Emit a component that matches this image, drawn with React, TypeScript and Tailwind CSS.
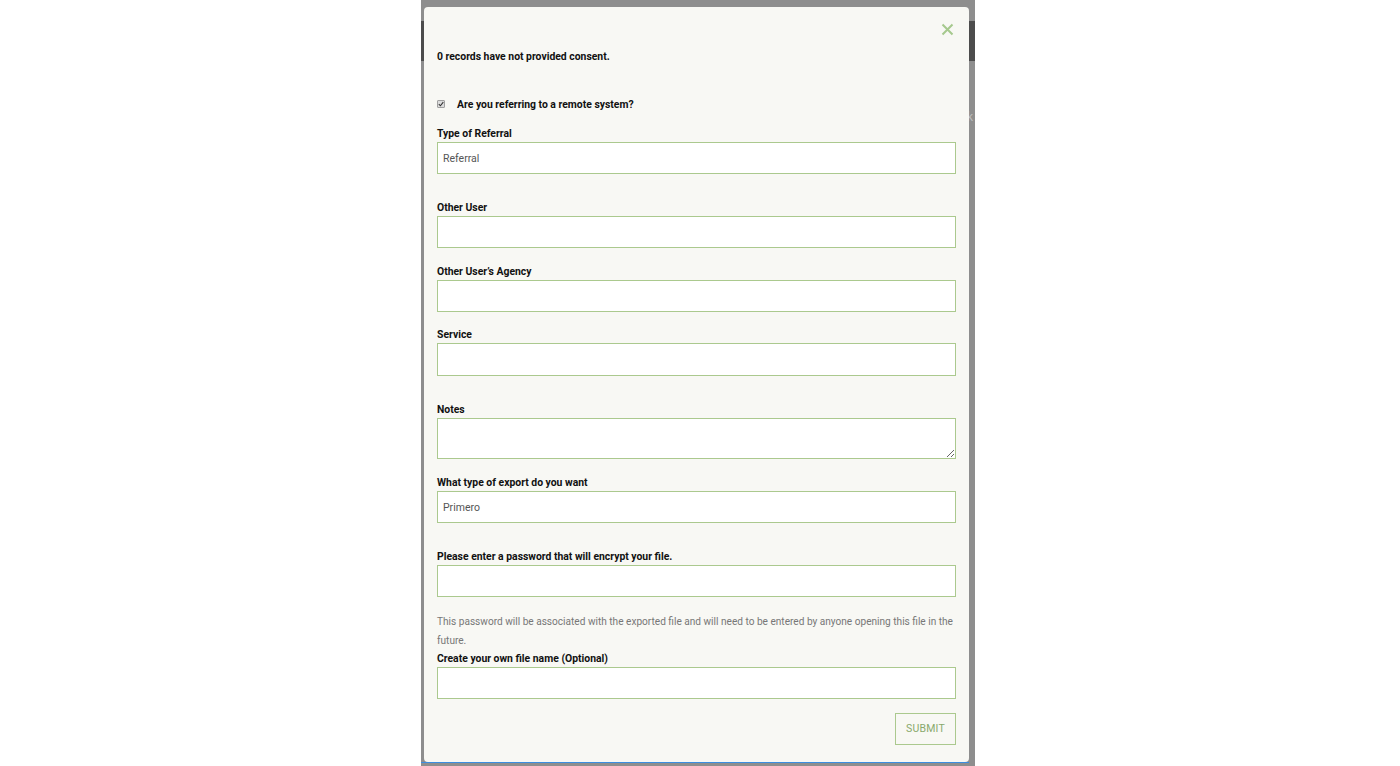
import React from "react";

const inputCls =
  "block w-full h-[32px] border border-[#abc98e] bg-white px-[5px] text-[10.5px] text-[#555] outline-none";

function Label({ children, className = "" }: { children: React.ReactNode; className?: string }) {
  return (
    <div className={"text-[10.4px] leading-[14px] font-bold text-[#111] mb-[1px] " + className}>
      {children}
    </div>
  );
}

export default function App() {
  return (
    <div
      className="w-[1400px] h-[766px] bg-white flex justify-start"
      style={{ fontFamily: "Roboto, 'Liberation Sans', sans-serif" }}
    >
      <div className="ml-[421px] w-[554px] h-[766px] bg-[#8e8e8e] flex flex-col">
        <div className="relative flex-1">
          {/* background page strips */}
          <div className="absolute left-0 top-[21px] w-[554px] h-[40px] bg-[#4c4c4c]" />
          <div className="absolute right-0 top-[106px] w-[8px] h-[22px] text-[12px] text-[#bbb] leading-[22px]">k</div>
          <div className="absolute left-0 top-[762px] w-[548px] h-[1px] bg-[#3d8de0]" />
          <div className="absolute left-[3px] top-[7px] w-[545px] h-[755px] rounded-[4px] bg-[#f8f8f4] px-[13px] flex flex-col">
            <div className="flex justify-end pt-[16px] pr-[2px] h-[39px]">
              <svg width="13" height="13" viewBox="0 0 13 13">
                <path d="M1.5 1.5 L11.5 11.5 M11.5 1.5 L1.5 11.5" stroke="#a6c98d" strokeWidth="2" />
              </svg>
            </div>
            <div className="text-[10.4px] leading-[14px] font-bold text-[#111] mt-[4px]">
              0 records have not provided consent.
            </div>
            <div className="flex items-center mt-[34px] h-[14px]">
              <span className="w-[8px] h-[8px] border border-[#a0a0a0] bg-[#dcdcdc] rounded-[1px] flex items-center justify-center -mt-[3px]">
                <svg width="6" height="6" viewBox="0 0 6 6">
                  <path d="M0.8 3.2 L2.4 4.8 L5.3 1.2" stroke="#333" strokeWidth="1.1" fill="none" />
                </svg>
              </span>
              <span className="ml-[12px] text-[10.4px] font-bold text-[#111]">
                Are you referring to a remote system?
              </span>
            </div>
            <Label className="mt-[15px]">Type of Referral</Label>
            <input className={inputCls} defaultValue="Referral" />
            <Label className="mt-[27px]">Other User</Label>
            <input className={inputCls} />
            <Label className="mt-[17px]">Other User’s Agency</Label>
            <input className={inputCls} />
            <Label className="mt-[16px]">Service</Label>
            <input className={inputCls + " h-[33px]"} />
            <Label className="mt-[27px]">Notes</Label>
            <textarea className="block w-full h-[41px] border border-[#abc98e] bg-white px-[5px] text-[10.5px] outline-none" />
            <Label className="mt-[17px]">What type of export do you want</Label>
            <input className={inputCls} defaultValue="Primero" />
            <Label className="mt-[27px]">Please enter a password that will encrypt your file.</Label>
            <input className={inputCls} />
            <div className="mt-[15px] text-[10.1px] leading-[19px] text-[#777]">
              This password will be associated with the exported file and will need to be entered by anyone opening this file in the future.
            </div>
            <Label className="mt-[2px]">Create your own file name (Optional)</Label>
            <input className={inputCls} />
            <div className="flex justify-end mt-[14px]">
              <button className="w-[61px] h-[32px] border border-[#abc98e] text-[10.5px] text-[#89a96c] tracking-[0.2px]">
                SUBMIT
              </button>
            </div>
          </div>
        </div>
      </div>
    </div>
  );
}
